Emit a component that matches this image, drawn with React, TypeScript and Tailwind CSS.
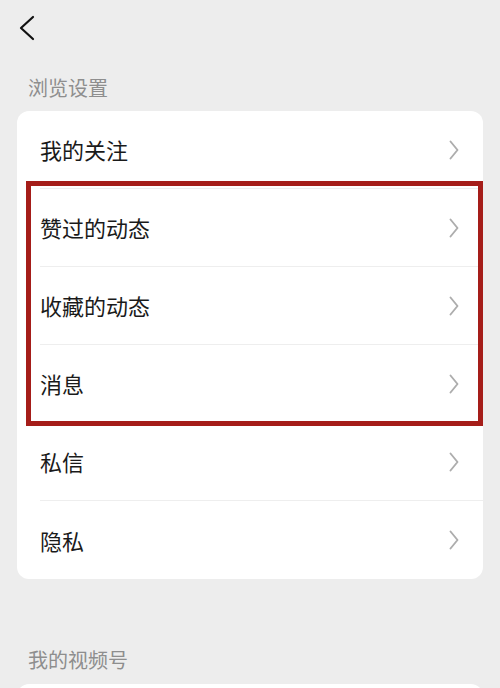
const rows = ["我的关注", "赞过的动态", "收藏的动态", "消息", "私信", "隐私"];

function Chevron() {
  return (
    <svg width="10" height="20" viewBox="0 0 10 20" fill="none">
      <path d="M1.5 1.5 L8.5 10 L1.5 18.5" stroke="#adadad" strokeWidth="1.9" strokeLinecap="round" strokeLinejoin="round" />
    </svg>
  );
}

export default function App() {
  return (
    <div
      className="w-[500px] h-[688px] overflow-hidden bg-[#ededed]"
      style={{ fontFamily: '"Noto Sans CJK SC", "Noto Sans", sans-serif' }}
    >
      <div className="h-[56px] pl-[18px] pt-[15px]">
        <svg width="17" height="26" viewBox="0 0 17 26" fill="none">
          <path d="M15 2 L3 13 L15 24" stroke="#111" strokeWidth="2.2" strokeLinecap="round" strokeLinejoin="round" />
        </svg>
      </div>

      <div className="pt-[18px] px-[28px] text-[20px] leading-[28px] text-[#8e8e8e]">浏览设置</div>

      <div className="relative mt-[9px] mx-[17px] bg-white rounded-[12px]">
        {rows.map((r, i) => (
          <div key={r} className="h-[78px] pl-[23px]">
            <div
              className={
                "h-full flex items-center justify-between pr-[24px] " +
                (i < rows.length - 1 ? "border-b border-[#eeeeee]" : "")
              }
            >
              <span className="text-[22px] text-[#1a1a1a]">{r}</span>
              <Chevron />
            </div>
          </div>
        ))}
        <div className="absolute left-[9px] top-[70px] w-[457px] h-[245px] border-[5px] border-[#a51d19]" />
      </div>

      <div className="mt-[67px] px-[28px] text-[20px] leading-[28px] text-[#8e8e8e]">我的视频号</div>
      <div className="mt-[10px] mx-[17px] h-[80px] bg-white rounded-[12px]" />
    </div>
  );
}
